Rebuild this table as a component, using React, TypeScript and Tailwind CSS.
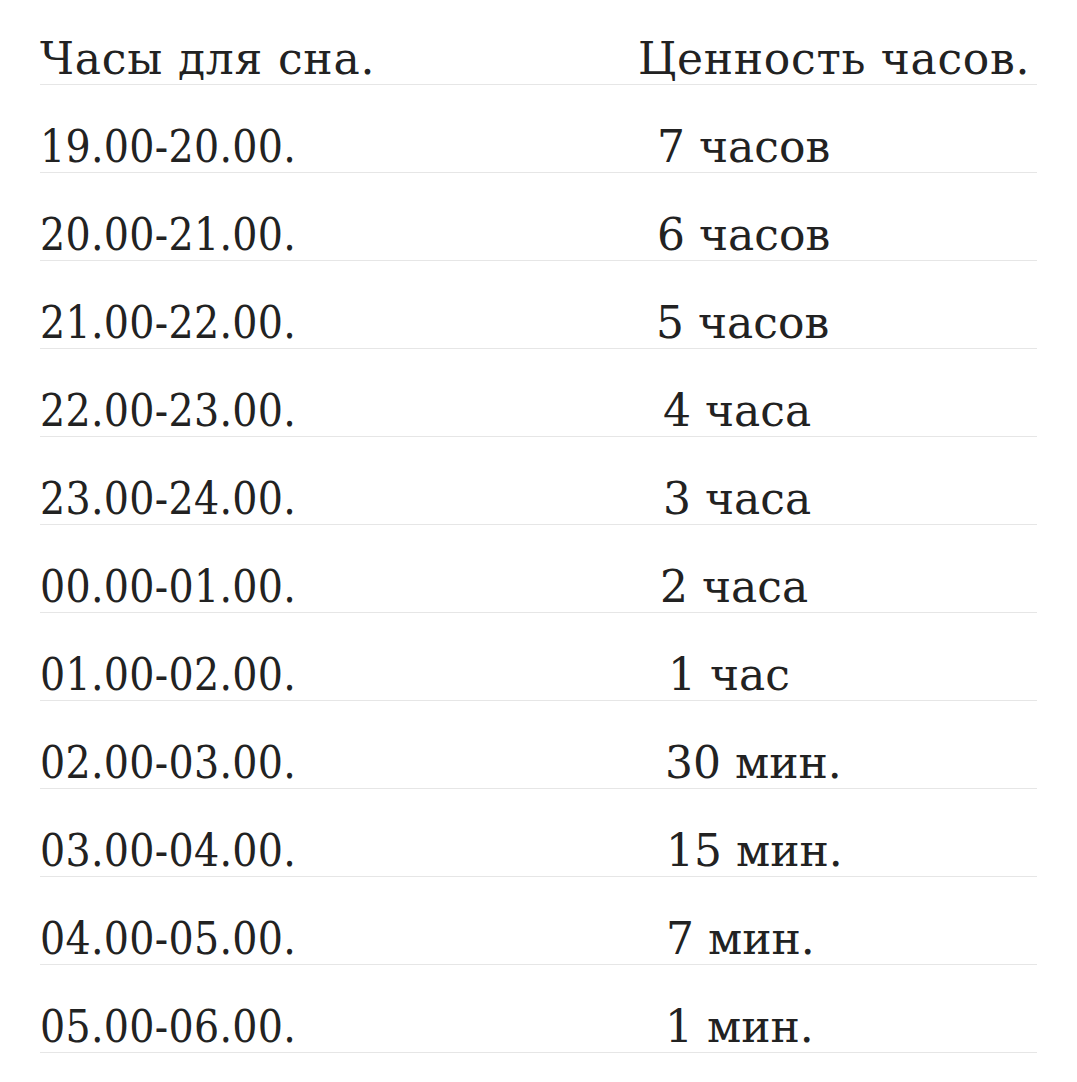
import React from "react";

const rows: [string, string, number][] = [
  ["19.00-20.00.", "7 часов", 657],
  ["20.00-21.00.", "6 часов", 657],
  ["21.00-22.00.", "5 часов", 656],
  ["22.00-23.00.", "4 часа", 663],
  ["23.00-24.00.", "3 часа", 663],
  ["00.00-01.00.", "2 часа", 660],
  ["01.00-02.00.", "1 час", 668],
  ["02.00-03.00.", "30 мин.", 665],
  ["03.00-04.00.", "15 мин.", 666],
  ["04.00-05.00.", "7 мин.", 666],
  ["05.00-06.00.", "1 мин.", 665],
];

export default function App() {
  return (
    <div className="min-h-[1082px] w-full bg-white px-[40px] text-[#222222] [font-family:'DejaVu_Serif',serif]">
      <div className="flex h-[85px] items-end border-b border-[#e6e6e6] pb-[3px] text-[44px] leading-none">
        <div className="w-[598px] shrink-0 whitespace-nowrap tracking-[0.8px]">Часы для сна.</div>
        <div className="whitespace-nowrap tracking-[0.7px]">Ценность часов.</div>
      </div>
      {rows.map(([t, v, x]) => (
        <div
          key={t}
          className="relative flex h-[88px] items-end border-b border-[#e6e6e6] pb-[3px] text-[44px] leading-none"
        >
          <div className="whitespace-nowrap [font-stretch:condensed] tracking-[0.3px]">{t}</div>
          <div className="absolute bottom-[3px] whitespace-nowrap" style={{ left: x - 40 }}>
            {v}
          </div>
        </div>
      ))}
    </div>
  );
}
